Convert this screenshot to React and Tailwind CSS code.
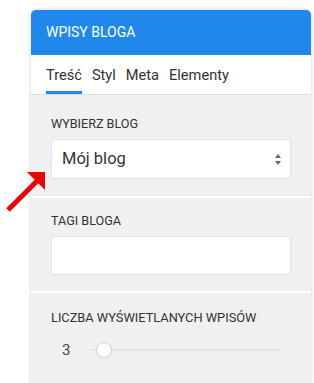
export default function App() {
  const font = { fontFamily: "Roboto, 'Liberation Sans', sans-serif" };
  return (
    <div className="relative w-[314px] h-[383px] overflow-hidden bg-white" style={font}>
      <div className="ml-[31px] mt-[10px] w-[280px] h-[400px] rounded-t-[5px] overflow-hidden shadow-[0_0_4px_rgba(0,0,0,0.18)] bg-[#f0f0f0]">
        <div className="h-[45px] bg-[#1f88ea] flex items-center px-[15px] text-white text-[14px]">
          WPISY BLOGA
        </div>
        <div className="h-[40px] bg-white border-b border-[#dcdcdc] flex items-end px-[15px] gap-[10px] text-[14.6px] text-[#333]">
          <div className="flex flex-col items-stretch">
            <span className="leading-[20px] mb-[6px]">Treść</span>
            <div className="h-[3px] bg-[#1f88ea]" />
          </div>
          <span className="leading-[20px] mb-[9px]">Styl</span>
          <span className="leading-[20px] mb-[9px]">Meta</span>
          <span className="leading-[20px] mb-[9px]">Elementy</span>
        </div>
        <div className="px-[20px] pt-[21px] pb-[17px] border-b-2 border-white">
          <div className="text-[12.6px] leading-[16px] text-[#333] mb-[7px]">WYBIERZ BLOG</div>
          <div className="h-[40px] bg-white border border-[#e2e2e2] rounded-[3px] flex items-center justify-between pl-[10px] pr-[9px]">
            <span className="text-[16.5px] text-[#333]">Mój blog</span>
            <svg width="6" height="11" viewBox="0 0 6 11">
              <path d="M3 0 L6 4 L0 4 Z" fill="#666" />
              <path d="M3 11 L6 7 L0 7 Z" fill="#666" />
            </svg>
          </div>
        </div>
        <div className="px-[20px] pt-[15px] pb-[16px] border-b-2 border-white">
          <div className="text-[12.6px] leading-[16px] text-[#333] mb-[7px]">TAGI BLOGA</div>
          <div className="h-[39px] bg-white border border-[#e2e2e2] rounded-[3px]" />
        </div>
        <div className="pl-[20px] pr-[30px] pt-[17px]">
          <div className="text-[12.8px] leading-[16px] text-[#333] mb-[14px]">LICZBA WYŚWIETLANYCH WPISÓW</div>
          <div className="flex items-center h-[20px]">
            <span className="w-[39px] pl-[11px] text-[15px] text-[#444]">3</span>
            <div className="relative flex-1 h-[2px] bg-[#e4e4e4]">
              <div className="absolute left-[6px] top-[-7px] w-[16px] h-[16px] rounded-full bg-white border border-[#cfcfcf]" />
            </div>
          </div>
        </div>
      </div>
      <svg className="absolute left-0 top-0" width="60" height="220" viewBox="0 0 60 220">
        <line x1="8" y1="210" x2="37" y2="181" stroke="#f00000" strokeWidth="5" />
        <polygon points="27,172 45,172 45,190" fill="#f00000" />
      </svg>
    </div>
  );
}
